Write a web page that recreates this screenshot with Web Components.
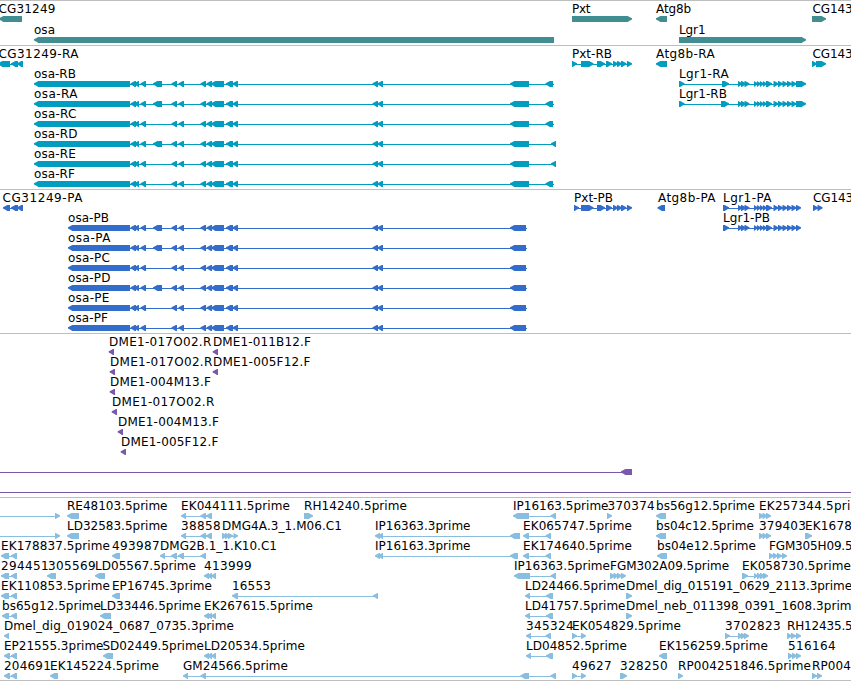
<!DOCTYPE html>
<html lang="en">
<head>
<meta charset="utf-8">
<title>Genome region</title>
<style>
  body {
    margin: 0;
    height: 681px;
    overflow: hidden;
    background: white;
    color: black;
    font: 12px/14px "DejaVu Sans", sans-serif;
  }
</style>
</head>
<body>
<genome-view></genome-view>

<script>
/*
 * Genome browser tracks
 * A feature is [label, label start, label end, strand, blocks, line end]
 */

const exons = "130.5-136 134-139 140.5-146";
const exons2 = "171.5-177 178.5-184 200.5-206 206.5-212 211-224 226-233 232.5-238 372.5-378 377.5-383";
const opt = "153-162";
const pxt = "581-593.5 597-605 606-612 613-618 617-622 621-626.5 627-632";
const lgr = "738-742.5 741-746 744.5-749.5 754-758 757-761 760-764 763-767 766-772 773.5-778.5 778-783 782.5-787.5 787-792 791.5-796.5";

function osa(name, start, tail, extra, lineEnd, width) {
  return [name, start, start + width, "-", `${start}-130 ${exons} ${extra} ${exons2} ${tail}`, lineEnd];
}

const tracks = [
  { color: "#408e92", pitch: 21, pad: 2, rows: [
    [["CG31249", -1.5, 55.5, "-", "-1-22"], ["Pxt", 572, 590, "+", "572-632"], ["Atg8b", 656, 691, "-", "656-667"], ["CG143", 812.5, 852.5, "+", "812-826"]],
    [["osa", 34, 55, "-", "34-554"], ["Lgr1", 679, 705.5, "+", "679-806"]]
  ] },
  { color: "#019dc0", rows: [
    [["CG31249-RA", -1.5, 79, "-", "-2-10 11-18 17-23"], ["Pxt-RB", 572, 612, "+", "572-577 " + pxt], ["Atg8b-RA", 656, 715, "-", "656-667"], ["CG143", 812.5, 852.5, "+", "812-817 816-826"]],
    [osa("osa-RB", 34, "510-529 545.5-553", opt, 554, 42), ["Lgr1-RA", 679, 729, "+", "679-684.5 722-729 " + lgr + " 796-806"]],
    [osa("osa-RA", 34, "510-529 545.5-553", opt, 554, 44), ["Lgr1-RB", 679, 727, "+", "679-684.5 721-729 " + lgr + " 796-806"]],
    [osa("osa-RC", 34, "510-529 545.5-553", "", 554, 42.5)],
    [osa("osa-RD", 34, "510-529 551-556", opt, 556, 43.5)],
    [osa("osa-RE", 34, "510-529 551-556", "", 556, 42)],
    [osa("osa-RF", 34, "510-529 545.5-553", "", 554, 41)]
  ] },
  { color: "#326dcc", rows: [
    [["CG31249-PA", 2.5, 83, "-", "3-10 11-18 17-23"], ["Pxt-PB", 574, 613, "+", "574-579 " + pxt], ["Atg8b-PA", 658, 716, "-", "657.5-665"], ["Lgr1-PA", 723, 772, "+", "723-729 " + lgr + " 796-801"], ["CG143", 813, 853, "+", "813-818 817.5-822.5"]],
    [osa("osa-PB", 68, "510-526", opt, 527, 41), ["Lgr1-PB", 723, 770, "+", "723-729 " + lgr + " 796-801"]],
    [osa("osa-PA", 68, "510-526", opt, 527, 43)],
    [osa("osa-PC", 68, "510-526", "", 527, 42)],
    [osa("osa-PD", 68, "510-526", opt, 527, 42.5)],
    [osa("osa-PE", 68, "510-526", "", 527, 41.5)],
    [osa("osa-PF", 68, "510-526", "", 527, 40)]
  ] },
  { color: "#7b58ab", rows: [
    [["DME1-017O02.R", 109, 211.5, "-", "108.7-114"], ["DME1-011B12.F", 213, 311, "-", "212.7-218"]],
    [["DME1-017O02.R", 110, 212.5, "-", "109.7-115"], ["DME1-005F12.F", 213, 310.5, "-", "212.7-218"]],
    [["DME1-004M13.F", 110, 211, "-", "109.7-115"]],
    [["DME1-017O02.R", 112, 214.5, "-", "111.7-117"]],
    [["DME1-004M13.F", 118, 219, "-", "117.7-123"]],
    [["DME1-005F12.F", 121, 218.5, "-", "120.7-126"]],
    [["", 0, 0, "-", "-10--5 621-632"]],
    [["", 0, 0, "-", "-10--5 856-861"]]
  ] },
  { color: "#89bee0", pad: 2, last: true, rows: [
    [["", 0, 0, "+", "-10--5 55-60"], ["RE48103.5prime", 67, 167.5, "-", "67-79"], ["EK044111.5prime", 181, 290, "-", "181-186 200.5-206 206-212"], ["RH14240.5prime", 304, 407, "+", "304-309 304-313"], ["IP16163.5prime", 513, 608.5, "-", "513-529 550.5-556"], ["370374", 607.5, 655, "+", "607-612"], ["bs56g12.5prime", 656, 755, "-", "656-666"], ["EK257344.5pri", 759, 850.5, "+", "759-764 762.5-767.5 766-771"]],
    [["", 0, 0, "+", "-10--5 55-60"], ["LD32583.5prime", 67, 167.5, "-", "67-79"], ["38858", 181, 221, "-", "181-186 200.5-206 206-212"], ["DMG4A.3_1.M06.C1", 222, 342, "+", "222-227 225-230 228-233 233.5-238"], ["IP16363.3prime", 375, 470.5, "-", "375-380 378-383 510-520"], ["EK065747.5prime", 523, 632, "-", "523-529 545.5-551"], ["bs04c12.5prime", 656, 754, "-", "656-666"], ["379403", 759, 806, "+", "759-764 762.5-767.5 766-771"], ["EK1678", 805, 852, "+", "805-812"]],
    [["EK178837.5prime", 1, 110, "-", "1-9 11-17"], ["493987", 112, 160, "-", "112-120"], ["DMG2B.1_1.K10.C1", 160, 277, "-", "160-165 171-177 178-184 200.5-206"], ["IP16163.3prime", 375, 470.5, "-", "375-380 378-383 510-518"], ["EK174640.5prime", 523, 632, "-", "523-529 545.5-551"], ["bs04e12.5prime", 657, 756, "-", "657-667"], ["FGM305H09.5", 769, 852.5, "+", "769-774 773-778 777-782 782-787"]],
    [["294451", 1, 49, "-", "1-9 11-17"], ["305569", 48, 96, "-", "47-56"], ["LD05567.5prime", 95, 196, "-", "95-105"], ["413999", 204, 252, "-", "204-209 207-212 211-216"], ["IP16363.5prime", 514, 610, "-", "514-530 550.5-556"], ["FGM302A09.5prime", 610, 729, "+", "610-615 613.5-618.5 617-622 621-626"], ["EK058730.5prime", 742, 851, "+", "742-748 754-758 757-762 760-765 763-768"]],
    [["EK110853.5prime", 1, 110, "-", "1-9 11-17"], ["EP16745.3prime", 112, 212, "-", "112-120"], ["16553", 232, 271, "-", "232-238 373-378"], ["LD24466.5prime", 525, 625.5, "-", "525-530 546-553"], ["Dmel_dig_015191_0629_2113.3prime", 626, 852, "+", "626-632"]],
    [["bs65g12.5prime", 2, 101, "-", "2-9 11-17"], ["LD33446.5prime", 100, 201, "-", "100-111"], ["EK267615.5prime", 204, 313, "-", "204-209 207-212 211-216"], ["LD41757.5prime", 525, 625.5, "-", "525-530 546-553"], ["Dmel_neb_011398_0391_1608.3prim", 626, 851.5, "+", "626-632"]],
    [["Dmel_dig_019024_0687_0735.3prime", 4, 234, "-", "4-9"], ["345324", 526, 574, "-", "526-531 545.5-551"], ["EK054829.5prime", 572, 681, "+", "572-577 581-586"], ["3702823", 725, 781, "+", "725-730 738-743 741-746 744-749"], ["RH12435.5", 787, 852.5, "+", "787-792 791-796 796-801"]],
    [["EP21555.3prime", 4, 103.5, "-", "4-10 11-17"], ["SD02449.5prime", 102.5, 204, "-", "103-113"], ["LD20534.5prime", 204, 305, "-", "204-209 207-212 211-216"], ["LD04852.5prime", 526, 627, "-", "526-531 546-553"], ["EK156259.5prime", 659, 768, "-", "659-667"], ["516164", 788, 836, "+", "788-793 792-797 796-801"]],
    [["204691", 4, 51, "-", "4-10 11-17"], ["EK145224.5prime", 50, 159, "-", "50-58"], ["GM24566.5prime", 183, 288, "-", "183-188 200.5-206 520.5-529 550.5-556"], ["49627", 572, 612, "+", "572-577 581-586"], ["328250", 620, 668, "+", "620-627"], ["RP004251846.5prime", 678, 811, "+", "678-683"], ["RP004", 812, 851, "+", "812-817 817-822"]]
  ] }
];

// One label with its strand-aware glyph
class SeqFeature extends HTMLElement {

  get template() {
    let t = document.createElement("template");
    t.innerHTML = `
    <style>
      :host {
        position: absolute;
        inset: 0;
      }

      .label {
        position: absolute;
        top: 1px;
        white-space: pre;
      }

      svg {
        position: absolute;
        top: 15px;
        left: 0;
        width: 100%;
        height: 6px;
        fill: var(--track-color);
      }
    </style>

    <span class="label"><slot></slot></span>
    <svg></svg>
    `;
    return t;
  }

  constructor() {
    super();
    this.attachShadow({ mode: "open" });
    this.shadowRoot.append(this.template.content.cloneNode(true));
  }

  connectedCallback() {
    this.fitLabel();
    this.drawBlocks();
  }

  // Spread the letters over the label's extent
  fitLabel() {
    let label = this.shadowRoot.querySelector(".label");
    let from = Number(this.getAttribute("from"));
    let to = Number(this.getAttribute("to"));
    let length = this.textContent.length;
    label.style.left = from + "px";
    if (length) {
      let natural = label.getBoundingClientRect().width;
      label.style.letterSpacing = (to - from - natural) / length + "px";
    }
  }

  drawBlocks() {
    let blocks = this.getAttribute("blocks").trim().split(/\s+/).map(b => {
      let m = b.match(/^(-?[\d.]+)-(-?[\d.]+)$/);
      return [Number(m[1]), Number(m[2])];
    });
    let reverse = this.getAttribute("strand") === "-";
    let start = blocks[0][0];
    let end = Number(this.getAttribute("end")) || blocks[blocks.length - 1][1];
    let shapes = "";
    if (blocks.length > 1) {
      shapes += `<rect x="${start + 2}" y="3" width="${end - start - (reverse ? 2 : 4)}" height="1" shape-rendering="crispEdges"/>`;
    }
    for (let [a, b] of blocks) {
      // the head rounds out a little before it meets the body
      let tip = reverse ? a : b;
      let tail = reverse ? b : a;
      let step = reverse ? 1 : -1;
      let head = tip + step * Math.min(4.3, b - a);
      let mid = tip + step * 2;
      shapes += `<polygon points="${tip},2.2 ${mid},1.2 ${head},0 ${tail},0 ${tail},6 ${head},6 ${mid},4.6 ${tip},3.6"/>`;
    }
    this.shadowRoot.querySelector("svg").innerHTML = shapes;
  }
}

// One line of features
class FeatureRow extends HTMLElement {
  constructor() {
    super();
    this.attachShadow({ mode: "open" });
    this.shadowRoot.innerHTML = `
    <style>
      :host {
        display: block;
        position: relative;
        height: var(--pitch);
      }
    </style>
    <slot></slot>
    `;
  }
}

// Stack of rows under a rule
class GenomeTrack extends HTMLElement {
  constructor() {
    super();
    this.attachShadow({ mode: "open" });
    this.shadowRoot.innerHTML = `
    <style>
      :host {
        display: flex;
        flex-direction: column;
        border-top: 1px solid #bebebe;
        padding-bottom: var(--pad);
      }

      :host([last]) {
        border-bottom: 1px solid #bebebe;
      }
    </style>
    <slot></slot>
    `;
  }
}

class GenomeView extends HTMLElement {
  constructor() {
    super();
    this.attachShadow({ mode: "open" });
    this.shadowRoot.innerHTML = `
    <style>
      :host {
        display: flex;
        flex-direction: column;
        width: 851px;
        overflow: hidden;
      }
    </style>
    `;
  }

  connectedCallback() {
    for (let track of tracks) {
      let panel = document.createElement("genome-track");
      panel.style.setProperty("--track-color", track.color);
      panel.style.setProperty("--pitch", (track.pitch || 20) + "px");
      panel.style.setProperty("--pad", (track.pad || 3) + "px");
      panel.toggleAttribute("last", Boolean(track.last));
      for (let features of track.rows) {
        let row = document.createElement("feature-row");
        for (let [name, from, to, strand, blocks, end] of features) {
          let feature = document.createElement("seq-feature");
          feature.textContent = name;
          feature.setAttribute("from", from);
          feature.setAttribute("to", to);
          feature.setAttribute("strand", strand);
          feature.setAttribute("blocks", blocks);
          if (end) feature.setAttribute("end", end);
          row.append(feature);
        }
        panel.append(row);
      }
      this.shadowRoot.append(panel);
    }
  }
}

customElements.define("seq-feature", SeqFeature);
customElements.define("feature-row", FeatureRow);
customElements.define("genome-track", GenomeTrack);
customElements.define("genome-view", GenomeView);
</script>
</body>
</html>
